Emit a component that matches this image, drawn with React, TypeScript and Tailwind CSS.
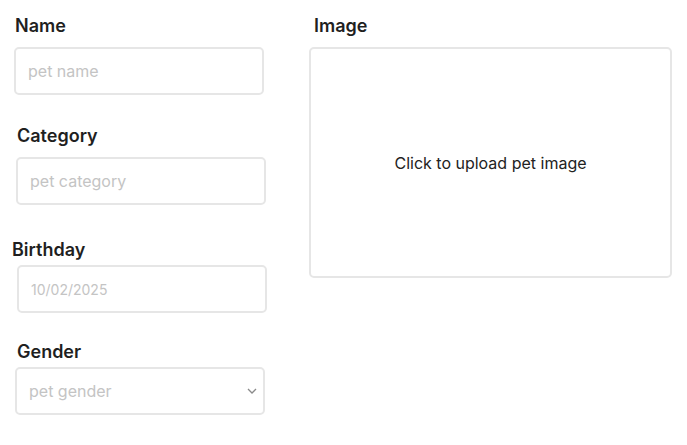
const font = { fontFamily: "Inter, 'Noto Sans', sans-serif" };

const Label = ({ children, className = "" }: { children: string; className?: string }) => (
  <label className={`block text-[18px] font-semibold leading-6 text-[#1f1f1f] ${className}`}>{children}</label>
);

const inputCls =
  "block h-12 w-[250px] rounded-[5px] border-2 border-[#e6e6e6] bg-white px-[12px] text-[16px] text-[#222] outline-none placeholder:text-[#c4c4c4]";

export default function App() {
  return (
    <div className="flex bg-white" style={font}>
      <div className="flex w-[300px] flex-col">
        <Label className="ml-[15px] mt-[14px]">Name</Label>
        <input className={`${inputCls} ml-[14px] mt-[9px]`} placeholder="pet name" />

        <Label className="ml-[17px] mt-[29px]">Category</Label>
        <input className={`${inputCls} ml-[16px] mt-[9px]`} placeholder="pet category" />

        <Label className="ml-[12px] mt-[33px]">Birthday</Label>
        <input className={`${inputCls} ml-[17px] mt-[3px] text-[14px] placeholder:text-[14px]`} placeholder="10/02/2025" />

        <Label className="ml-[17px] mt-[27px]">Gender</Label>
        <div className="relative ml-[15px] mt-[3px] w-[250px]">
          <select
            defaultValue=""
            className={`${inputCls} appearance-none text-[#c4c4c4]`}
          >
            <option value="" disabled>
              pet gender
            </option>
            <option value="male">male</option>
            <option value="female">female</option>
          </select>
          <svg
            className="pointer-events-none absolute right-[8px] top-1/2 -translate-y-1/2"
            width="10"
            height="6"
            viewBox="0 0 10 6"
            fill="none"
          >
            <path d="M1 1l4 4 4-4" stroke="#8a8a8a" strokeWidth="1.3" />
          </svg>
        </div>
      </div>

      <div className="flex flex-col">
        <Label className="ml-[14px] mt-[14px]">Image</Label>
        <div className="ml-[9px] mt-[9px] flex h-[231px] w-[363px] cursor-pointer items-center justify-center rounded-[5px] border-2 border-[#e6e6e6] text-base text-[#222]">
          Click to upload pet image
        </div>
      </div>
    </div>
  );
}
